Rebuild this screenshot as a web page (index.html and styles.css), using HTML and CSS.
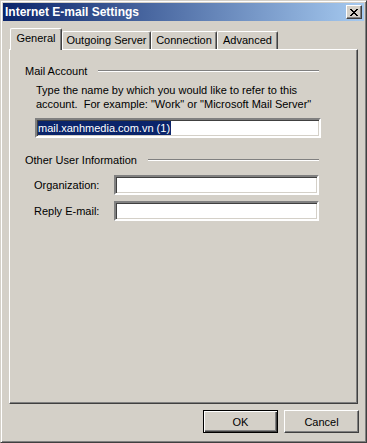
FILE: index.html
```html
<!DOCTYPE HTML>
<html>
<head>
<meta charset="utf-8">
<title>Internet E-mail Settings</title>
<link rel="stylesheet" href="styles.css">
</head>
<body>
	<div class="window">
		<div class="titlebar">
			<span class="title">Internet E-mail Settings</span>
			<a class="close" href="javascript:;">
				<svg width="8" height="7" viewBox="0 0 8 7"><path d="M0 0h2v1h1v1h2v-1h1v-1h2v1h-1v1h-1v1h-1v1h1v1h1v1h1v1h-2v-1h-1v-1h-2v1h-1v1h-2v-1h1v-1h1v-1h1v-1h-1v-1h-1v-1h-1z" fill="#000"/></svg>
			</a>
		</div>
		<div class="tabs">
			<a class="tab on" href="javascript:;" style="width:52px">General</a>
			<a class="tab" href="javascript:;" style="width:89px">Outgoing Server</a>
			<a class="tab" href="javascript:;" style="width:66px">Connection</a>
			<a class="tab" href="javascript:;" style="width:61px">Advanced</a>
		</div>
		<div class="panel">
			<div class="group-head"><span>Mail Account</span><i class="etch"></i></div>
			<p class="desc">Type the name by which you would like to refer to this<br>account.&nbsp; For example: "Work" or "Microsoft Mail Server"</p>
			<div class="field field-wide"><span class="sel">mail.xanhmedia.com.vn (1)</span></div>

			<div class="group-head group-two"><span>Other User Information</span><i class="etch"></i></div>
			<div class="row">
				<label>Organization:</label>
				<div class="field field-short"></div>
			</div>
			<div class="row row-two">
				<label>Reply E-mail:</label>
				<div class="field field-short"></div>
			</div>
		</div>
		<div class="buttons">
			<a class="btn default" href="javascript:;"><span>OK</span></a>
			<a class="btn" href="javascript:;"><span>Cancel</span></a>
		</div>
	</div>
</body>
</html>
```

FILE: styles.css
```css
*{padding:0;margin:0;box-sizing:border-box}
body{background:#d4d0c8;font-family:"Liberation Sans",Arial,sans-serif;font-size:11px;color:#000}
a{color:#000;text-decoration:none}
.window{width:367px;height:443px;padding:2px;background:#d4d0c8;border:1px solid;border-color:#d4d0c8 #404040 #404040 #d4d0c8;box-shadow:inset 1px 1px #fff,inset -1px -1px #808080}
.titlebar{height:18px;display:flex;align-items:center;padding:0 2px;background:linear-gradient(to right,#0a246a,#a6caf0)}
.title{color:#fff;font-weight:bold;font-size:12px}
.close{margin-left:auto;width:16px;height:14px;display:flex;align-items:center;justify-content:center;background:#d4d0c8;border:1px solid;border-color:#fff #404040 #404040 #fff;box-shadow:inset -1px -1px #808080}
.tabs{margin-top:7px;height:21px;padding-left:7px;display:flex;align-items:flex-end;position:relative;z-index:1}
.tab{height:18px;display:flex;align-items:center;justify-content:center;padding-bottom:1px;background:#d4d0c8;border:1px solid;border-bottom:0;border-color:#fff #404040 #404040 #fff;box-shadow:inset -1px 0 #808080;border-radius:2px 2px 0 0;white-space:nowrap}
.tab.on{height:22px;margin-bottom:-1px;padding-bottom:3px}
.panel{margin-left:6px;width:349px;height:355px;padding-left:15px;border:1px solid;border-color:#fff #404040 #404040 #fff;box-shadow:inset -1px -1px #808080}
.group-head{margin-top:14px;width:294px;height:14px;display:flex;align-items:center;gap:11px}
.group-two{margin-top:15px}
.etch{flex:1;height:2px;border-top:1px solid #808080;border-bottom:1px solid #fff}
.desc{margin-top:5px;padding-left:11px;line-height:14px}
.field{height:20px;background:#fff;border:2px solid;border-color:#808080 #fff #fff #808080;box-shadow:inset 1px 1px #404040,inset -1px -1px #d4d0c8;display:flex;align-items:center;padding-left:1px}
.field-wide{margin-top:7px;margin-left:10px;width:286px}
.field-short{width:205px}
.sel{background:#0a246a;color:#fff;line-height:14px;padding-right:1px}
.row{margin-top:8px;display:flex;align-items:center}
.row-two{margin-top:6px}
.row label{width:89px;padding-left:9px}
.buttons{margin-top:6px;display:flex;justify-content:flex-end;gap:6px;padding-right:5px}
.btn{width:75px;height:23px;display:flex;align-items:center;justify-content:center;background:#d4d0c8;border:1px solid;border-color:#fff #404040 #404040 #fff;box-shadow:inset -1px -1px #808080}
.btn.default{border-color:#000;box-shadow:inset 1px 1px #fff,inset -1px -1px #404040,inset -2px -2px #808080}
```
